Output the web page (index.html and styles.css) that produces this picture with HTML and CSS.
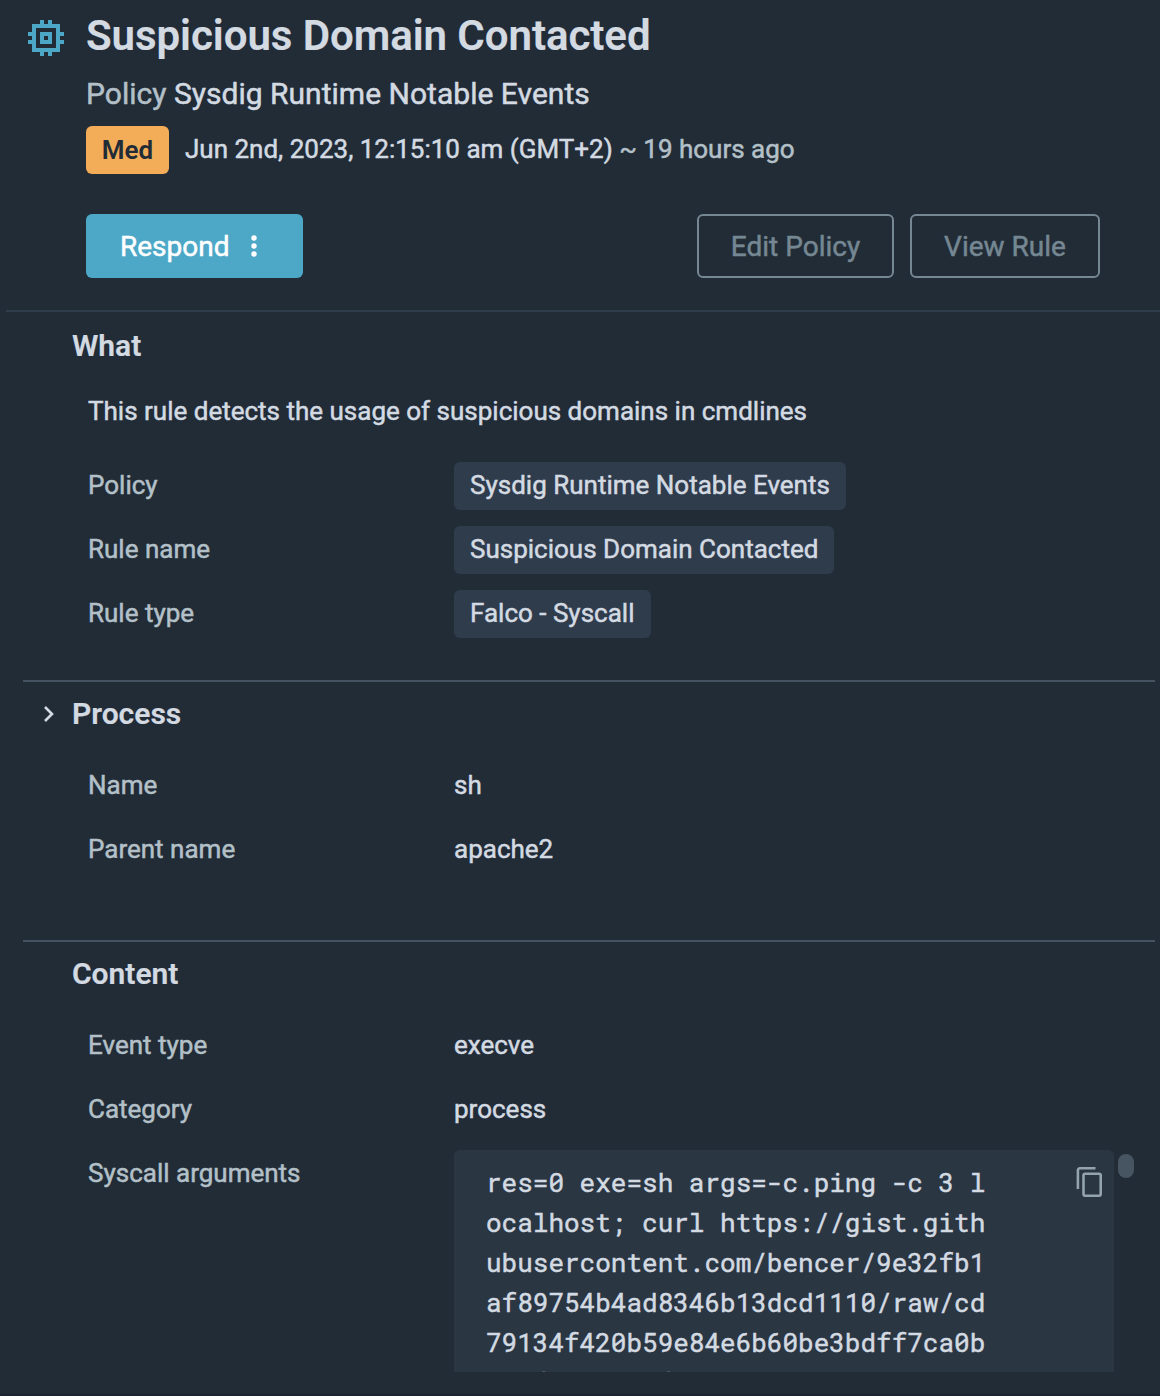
FILE: index.html
```
<!DOCTYPE html>
<html lang="en">
<head>
  <meta charset="UTF-8">
  <meta name="viewport" content="width=device-width, initial-scale=1.0">
  <title>Suspicious Domain Contacted</title>
  <link rel="stylesheet" href="styles.css">
</head>
<body>
  <div id="eventPanel">

    <header class="event-header">
      <svg class="chip-icon" viewBox="0 0 18 18" fill="currentColor" shape-rendering="crispEdges">
        <path fill-rule="evenodd" d="M2 2h4V0h2v2h2V0h2v2h4v4h2v2h-2v2h2v2h-2v4h-4v2h-2v-2H8v2H6v-2H2v-4H0v-2h2V8H0V6h2zM4 4v10h10V4z"/>
        <path fill-rule="evenodd" d="M6 6h6v6H6zM8 8v2h2V8z"/>
      </svg>
      <div class="event-info">
        <h1>Suspicious Domain Contacted</h1>
        <div class="policy-line"><span class="muted">Policy</span> Sysdig Runtime Notable Events</div>
        <div class="time-line">
          <span class="severity">Med</span>
          <span class="time">Jun 2nd, 2023, 12:15:10 am (GMT+2) <span class="muted">~ 19 hours ago</span></span>
        </div>
        <div class="actions">
          <button class="btn btn-primary">
            <span class="respond-text">Respond</span>
            <svg class="dots" viewBox="0 0 6 22" fill="currentColor">
              <circle cx="3" cy="3" r="2.7"/>
              <circle cx="3" cy="11" r="2.7"/>
              <circle cx="3" cy="19" r="2.7"/>
            </svg>
          </button>
          <button class="btn btn-outline btn-edit">Edit Policy</button>
          <button class="btn btn-outline btn-view">View Rule</button>
        </div>
      </div>
    </header>

    <section class="section what">
      <h2><span>What</span></h2>
      <p class="description">This rule detects the usage of suspicious domains in cmdlines</p>
      <div class="row"><span class="label">Policy</span><span class="pill pill-policy">Sysdig Runtime Notable Events</span></div>
      <div class="row"><span class="label">Rule name</span><span class="pill pill-rule">Suspicious Domain Contacted</span></div>
      <div class="row"><span class="label">Rule type</span><span class="pill pill-type">Falco - Syscall</span></div>
    </section>

    <section class="section process">
      <h2>
        <svg class="chevron" viewBox="0 0 12 18" fill="none" stroke="currentColor" stroke-width="2.6"><path d="M2 2l7 7-7 7"/></svg>
        <span>Process</span>
      </h2>
      <div class="row"><span class="label">Name</span><span class="value">sh</span></div>
      <div class="row"><span class="label">Parent name</span><span class="value">apache2</span></div>
    </section>

    <section class="section content">
      <h2><span>Content</span></h2>
      <div class="row"><span class="label">Event type</span><span class="value">execve</span></div>
      <div class="row"><span class="label">Category</span><span class="value">process</span></div>
      <div class="row row-code">
        <span class="label">Syscall arguments</span>
        <div class="code-box">
          <code>res=0 exe=sh args=-c.ping -c 3 localhost; curl https://gist.githubusercontent.com/bencer/9e32fb1af89754b4ad8346b13dcd1110/raw/cd79134f420b59e84e6b60be3bdff7ca0bbaefcaeacecfa5</code>
          <svg class="copy-icon" viewBox="0 0 26 30" fill="none" stroke="currentColor" stroke-width="2.6">
            <path d="M1.9 22V3.3a2 2 0 0 1 2-2H19.5"/>
            <rect x="7.5" y="6.7" width="17.2" height="22" rx="1.6"/>
          </svg>
        </div>
        <div class="scroll-thumb"></div>
      </div>
    </section>

  </div>
</body>
</html>
```
FILE: styles.css
```
* {
  box-sizing: border-box;
}

body, html {
  height: 100%;
  margin: 0;
  overflow: hidden;
}

body {
  font-family: Roboto, "Liberation Sans", sans-serif;
  font-size: 26px;
  color: #d3dae2;
  background: #212c37;
  -webkit-text-stroke: 0.5px;
}

#eventPanel {
  height: 1396px;
  overflow: hidden;
  border-bottom: 2px solid #1c2530;
}

h1, h2, p {
  margin: 0;
}

.muted {
  color: #b3c0c8;
}

/* Header */
.event-header {
  display: flex;
  height: 312px;
  margin-left: 6px;
  padding: 8px 60px 0 22px;
  border-bottom: 2px solid #2f3c4c;
}

.chip-icon {
  width: 36px;
  height: 36px;
  margin: 12px 22px 0 0;
  color: #4da8c7;
  flex: none;
}

.event-info {
  flex: 1;
}

h1 {
  font-size: 42px;
  font-weight: 600;
  line-height: 56px;
  letter-spacing: -0.05px;
}

.policy-line {
  margin-top: 10px;
  font-size: 30px;
  line-height: 40px;
  letter-spacing: 0.02px;
}

.time-line {
  display: flex;
  align-items: center;
  gap: 16px;
  margin-top: 12px;
  height: 48px;
}

.severity {
  width: 83px;
  height: 48px;
  line-height: 48px;
  border-radius: 6px;
  background: #f3ad59;
  color: #212c37;
  font-weight: 600;
  text-align: center;
  -webkit-text-stroke: 0;
}

.time {
  line-height: 46px;
  margin-top: -2px;
}

.actions {
  display: flex;
  gap: 16px;
  margin-top: 40px;
}

.btn {
  display: flex;
  align-items: center;
  justify-content: center;
  height: 64px;
  padding: 0;
  border: none;
  border-radius: 6px;
  font-family: inherit;
  font-size: 28px;
  cursor: pointer;
}

.btn-primary {
  width: 217px;
  margin-right: auto;
  padding-left: 34px;
  justify-content: flex-start;
  color: #fff;
  background: #4da8c7;
}

.respond-text {
  width: 131px;
  text-align: left;
}

.dots {
  width: 6px;
  height: 22px;
}

.btn-outline {
  color: #758792;
  background: none;
  border: 2px solid #758792;
}

.btn-edit {
  width: 197px;
}

.btn-view {
  width: 190px;
}

/* Sections */
.section {
  margin: 0 5px 0 23px;
}

.process, .content {
  border-top: 2px solid #435161;
}

.what {
  height: 368px;
}

.process {
  height: 260px;
}

h2 {
  display: flex;
  align-items: center;
  height: 62px;
  padding-left: 49px;
  font-size: 30px;
  font-weight: 600;
}

h1, h2 {
  -webkit-text-stroke: 0.2px;
}

.what h2 {
  height: 66px;
}

.process h2, .content h2 {
  margin-bottom: 9px;
}

.chevron {
  width: 12px;
  height: 18px;
  margin: 1px 17px 0 -29px;
}

.description {
  padding-left: 65px;
  line-height: 66px;
  margin-bottom: 9px;
}

.row {
  display: flex;
  align-items: center;
  height: 64px;
  padding-left: 65px;
}

.label {
  width: 366px;
  color: #b3c0c8;
}

.pill {
  height: 48px;
  padding-left: 16px;
  line-height: 46px;
  border-radius: 6px;
  background: #2f3c4c;
}

.what .row {
  padding-top: 2px;
}

.what .label {
  margin-top: -2px;
}

.pill-policy {
  width: 392px;
}

.pill-rule {
  width: 380px;
}

.pill-type {
  width: 197px;
}

/* Syscall arguments */
.row-code {
  align-items: flex-start;
  height: auto;
  margin-top: 9px;
}

.row-code .label {
  line-height: 46px;
}

.code-box {
  display: flex;
  width: 660px;
  height: 222px;
  padding: 12px 12px 0 32px;
  overflow: hidden;
  border-radius: 6px 6px 0 0;
  background: #2a3642;
}

code {
  width: 505px;
  font-family: "Roboto Mono", "Liberation Mono", monospace;
  font-size: 26px;
  line-height: 40px;
  word-break: break-all;
}

.copy-icon {
  width: 26px;
  height: 30px;
  margin: 5px 0 0 auto;
  color: #93a3af;
}

.scroll-thumb {
  width: 16px;
  height: 24px;
  margin: 4px 0 0 4px;
  border-radius: 8px;
  background: #475563;
}
```
